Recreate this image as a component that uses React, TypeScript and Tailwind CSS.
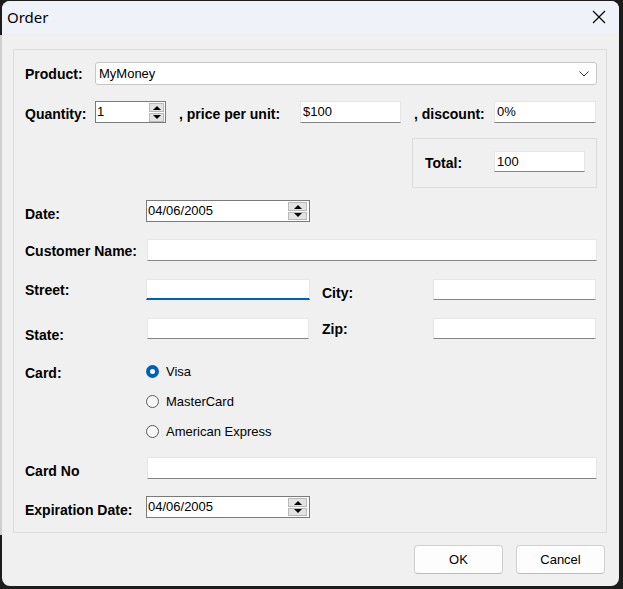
import React from "react";

const font = { fontFamily: '"Liberation Sans", Arial, sans-serif' };

function Label({ children, className = "" }: { children: React.ReactNode; className?: string }) {
  return <div className={`text-[14px] font-bold leading-[16px] text-black whitespace-nowrap ${className}`}>{children}</div>;
}

function TextBox({ className = "", value = "" }: { className?: string; value?: string }) {
  return (
    <div className={`bg-white border border-[#e6e6e6] border-b-[#868686] flex items-center pl-[2px] text-[13px] text-black ${className}`}>
      {value}
    </div>
  );
}

function Spinner({ className = "" }: { className?: string }) {
  return (
    <div className={`flex flex-col gap-[1px] ${className}`}>
      <div className="flex-1 bg-[#e3e3e3] border border-[#b9b9b9] flex items-center justify-center">
        <svg width="8" height="5" viewBox="0 0 8 5"><path d="M0 5 L4 1 L8 5 Z" fill="#000" /></svg>
      </div>
      <div className="flex-1 bg-[#e3e3e3] border border-[#b9b9b9] flex items-center justify-center">
        <svg width="8" height="5" viewBox="0 0 8 5"><path d="M0 0 L8 0 L4 4 Z" fill="#000" /></svg>
      </div>
    </div>
  );
}

function DatePicker({ className = "" }: { className?: string }) {
  return (
    <div className={`bg-white border border-[#7a7a7a] h-[22px] w-[164px] flex items-center justify-between pl-[1px] pr-[2px] text-[13px] text-black ${className}`}>
      <span>04/06/2005</span>
      <Spinner className="w-[19px] h-[18px]" />
    </div>
  );
}

function Radio({ checked, label, className = "" }: { checked?: boolean; label: string; className?: string }) {
  return (
    <div className={`flex items-center h-[17px] ${className}`}>
      {checked ? (
        <div className="w-[13px] h-[13px] rounded-full bg-[#005fb8] flex items-center justify-center">
          <div className="w-[5px] h-[5px] rounded-full bg-white" />
        </div>
      ) : (
        <div className="w-[13px] h-[13px] rounded-full border border-[#5a5a5a] bg-[#f7f7f7]" />
      )}
      <span className="ml-[7px] text-[13px] text-black">{label}</span>
    </div>
  );
}

export default function App() {
  return (
    <div className="w-[623px] h-[589px] bg-[#1c1c1c] flex pt-[1px] overflow-hidden" style={font}>
      <div className="w-[2px] flex flex-col">
        <div className="h-[34px]" />
        <div className="h-[500px] bg-[#cfcfcf]" />
      </div>
      <div className="w-[617px] h-[585px] rounded-[8px] overflow-hidden bg-[#f0f0f0] flex flex-col">
        <div className="h-[32px] bg-[#eff3f9] flex items-center justify-between pl-[5px] pr-[13px]">
          <span className="text-[15px] text-black" style={{ fontFamily: '"Noto Sans", "Open Sans", sans-serif' }}>Order</span>
          <svg width="14" height="14" viewBox="0 0 14 14">
            <path d="M1 1 L13 13 M13 1 L1 13" stroke="#000" strokeWidth="1.2" />
          </svg>
        </div>
        <div className="flex-1 flex flex-col">
          <div className="mt-[16px] ml-[11px] w-[594px] h-[484px] border border-[#dcdcdc] pl-[11px] flex flex-col">
            {/* Product */}
            <div className="mt-[12px] h-[23px] flex items-center">
              <Label className="w-[70px]">Product:</Label>
              <div className="w-[502px] h-[23px] bg-white border border-[#c6c6c6] rounded-[3px] flex items-center justify-between pl-[3px] pr-[7px] text-[13px] text-black">
                <span>MyMoney</span>
                <svg width="10" height="6" viewBox="0 0 10 6"><path d="M0.5 0.5 L5 5 L9.5 0.5" stroke="#333" strokeWidth="1" fill="none" /></svg>
              </div>
            </div>
            {/* Quantity */}
            <div className="mt-[16px] h-[22px] flex items-center">
              <Label className="w-[70px] pt-[4px]">Quantity:</Label>
              <div className="w-[71px] h-[22px] bg-white border border-[#7a7a7a] flex items-center justify-between pl-[1px] pr-[1px] text-[13px] text-black">
                <span>1</span>
                <Spinner className="w-[15px] h-[19px]" />
              </div>
              <Label className="ml-[13px] w-[121px] pt-[4px]">, price per unit:</Label>
              <TextBox className="w-[101px] h-[22px]" value="$100" />
              <Label className="ml-[13px] w-[80px] pt-[4px]">, discount:</Label>
              <TextBox className="w-[102px] h-[22px]" value="0%" />
            </div>
            {/* Total */}
            <div className="mt-[15px] ml-[387px] w-[185px] h-[50px] border border-[#dcdcdc] flex items-center pl-[12px] pb-[3px]">
              <Label className="w-[69px] pt-[3px]">Total:</Label>
              <TextBox className="w-[91px] h-[21px]" value="100" />
            </div>
            {/* Date */}
            <div className="mt-[12px] h-[22px] flex items-center">
              <Label className="w-[121px] pt-[5px]">Date:</Label>
              <DatePicker />
            </div>
            {/* Customer Name */}
            <div className="mt-[17px] h-[22px] flex items-center">
              <Label className="w-[122px] pt-[2px]">Customer Name:</Label>
              <TextBox className="w-[450px] h-[22px]" />
            </div>
            {/* Street / City */}
            <div className="mt-[18px] h-[21px] flex items-center">
              <Label className="w-[121px]">Street:</Label>
              <div className="w-[164px] h-[21px] bg-white border border-[#e6e6e6] border-b-2 border-b-[#005fb8]" />
              <Label className="ml-[12px] w-[111px] pt-[7px]">City:</Label>
              <TextBox className="w-[163px] h-[21px]" />
            </div>
            {/* State / Zip */}
            <div className="mt-[18px] h-[21px] flex items-center">
              <Label className="w-[122px] pt-[13px]">State:</Label>
              <TextBox className="w-[162px] h-[21px]" />
              <Label className="ml-[13px] w-[111px] pt-[1px]">Zip:</Label>
              <TextBox className="w-[163px] h-[21px]" />
            </div>
            {/* Card */}
            <div className="mt-[24px] flex items-start">
              <Label className="w-[121px] mt-[2px]">Card:</Label>
              <div className="flex flex-col">
                <Radio checked label="Visa" />
                <Radio label="MasterCard" className="mt-[13px]" />
                <Radio label="American Express" className="mt-[13px]" />
              </div>
            </div>
            {/* Card No */}
            <div className="mt-[17px] h-[22px] flex items-center">
              <Label className="w-[122px] pt-[5px]">Card No</Label>
              <TextBox className="w-[450px] h-[22px]" />
            </div>
            {/* Expiration */}
            <div className="mt-[17px] h-[22px] flex items-center">
              <Label className="w-[121px] pt-[5px]">Expiration Date:</Label>
              <DatePicker />
            </div>
          </div>
          <div className="mt-[12px] flex">
            <button className="ml-[412px] w-[89px] h-[29px] bg-[#fdfdfd] border border-[#d0d0d0] border-b-[#bcbcbc] rounded-[4px] text-[13px] text-black">OK</button>
            <button className="ml-[13px] w-[89px] h-[29px] bg-[#fdfdfd] border border-[#d0d0d0] border-b-[#bcbcbc] rounded-[4px] text-[13px] text-black">Cancel</button>
          </div>
        </div>
      </div>
    </div>
  );
}
